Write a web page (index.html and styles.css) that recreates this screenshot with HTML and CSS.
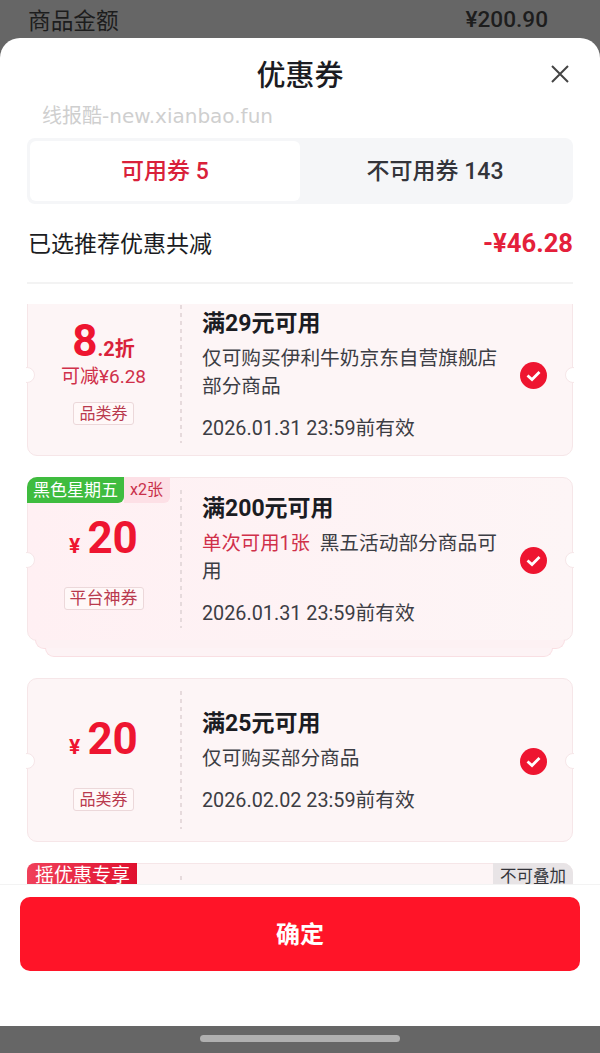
FILE: index.html
```html
<!DOCTYPE html>
<html lang="zh-CN">
<head>
    <meta charset="UTF-8">
    <meta name="viewport" content="width=device-width, initial-scale=1.0">
    <title>优惠券</title>
    <link rel="stylesheet" href="styles.css">
</head>
<body>
<div class="page-row">
    <span>商品金额</span>
    <span class="page-price">¥200.90</span>
</div>
<div class="sheet">
    <header class="sheet-head">
        <h1>优惠券</h1>
        <button class="close" aria-label="关闭">
            <svg width="20" height="20" viewBox="0 0 20 20"><path d="M2 2 L18 18 M18 2 L2 18" stroke="#444" stroke-width="2" fill="none"/></svg>
        </button>
    </header>
    <div class="watermark">线报酷-new.xianbao.fun</div>
    <div class="tabs">
        <button class="tab active">可用券 5</button>
        <button class="tab">不可用券 143</button>
    </div>
    <div class="summary">
        <span class="summary-label">已选推荐优惠共减</span>
        <span class="summary-amount">-¥46.28</span>
    </div>
    <div class="divider"></div>

    <div class="list">
        <div class="coupon first">
            <i class="notch left"></i><i class="notch right"></i>
            <div class="coupon-left">
                <div class="amount-area">
                    <div class="amount"><span class="big">8</span><span class="rest">.2折</span></div>
                    <div class="saving">可减¥6.28</div>
                </div>
                <span class="kind">品类券</span>
            </div>
            <div class="coupon-right">
                <div class="coupon-title">满29元可用</div>
                <div class="coupon-desc">仅可购买伊利牛奶京东自营旗舰店部分商品</div>
                <div class="coupon-date">2026.01.31 23:59前有效</div>
            </div>
            <svg class="check" width="27" height="27" viewBox="0 0 27 27"><circle cx="13.5" cy="13.5" r="13.5" fill="#ee1530"/><path d="M7.5 13.5 L12 17.5 L19.5 10" stroke="#fff" stroke-width="2.8" fill="none"/></svg>
        </div>

        <div class="coupon stacked">
            <i class="notch left"></i><i class="notch right"></i>
            <div class="flags">
                <span class="flag-green">黑色星期五</span>
                <span class="flag-count">x2张</span>
            </div>
            <div class="coupon-left">
                <div class="amount-area">
                    <div class="amount"><span class="yen">¥</span><span class="big">20</span></div>
                </div>
                <span class="kind wide">平台神券</span>
            </div>
            <div class="coupon-right">
                <div class="coupon-title">满200元可用</div>
                <div class="coupon-desc"><span class="once">单次可用1张</span>&nbsp;&nbsp;黑五活动部分商品可用</div>
                <div class="coupon-date">2026.01.31 23:59前有效</div>
            </div>
            <svg class="check" width="27" height="27" viewBox="0 0 27 27"><circle cx="13.5" cy="13.5" r="13.5" fill="#ee1530"/><path d="M7.5 13.5 L12 17.5 L19.5 10" stroke="#fff" stroke-width="2.8" fill="none"/></svg>
        </div>

        <div class="coupon">
            <i class="notch left"></i><i class="notch right"></i>
            <div class="coupon-left">
                <div class="amount-area">
                    <div class="amount"><span class="yen">¥</span><span class="big">20</span></div>
                </div>
                <span class="kind">品类券</span>
            </div>
            <div class="coupon-right">
                <div class="coupon-title">满25元可用</div>
                <div class="coupon-desc">仅可购买部分商品</div>
                <div class="coupon-date">2026.02.02 23:59前有效</div>
            </div>
            <svg class="check" width="27" height="27" viewBox="0 0 27 27"><circle cx="13.5" cy="13.5" r="13.5" fill="#ee1530"/><path d="M7.5 13.5 L12 17.5 L19.5 10" stroke="#fff" stroke-width="2.8" fill="none"/></svg>
        </div>

        <div class="coupon">
            <div class="flags">
                <span class="flag-red">摇优惠专享</span>
            </div>
            <span class="flag-grey">不可叠加</span>
            <div class="coupon-left"></div>
        </div>
    </div>

    <div class="sheet-foot">
        <button class="confirm">确定</button>
    </div>
</div>
<div class="home-area">
    <div class="home-bar"></div>
</div>
</body>
</html>
```

FILE: styles.css
```css
* {
    box-sizing: border-box;
}

body {
    margin: 0;
    height: 1053px;
    overflow: hidden;
    display: flex;
    flex-direction: column;
    background-color: #666;
    font-family: Roboto, "Noto Sans CJK SC", sans-serif;
    color: #1b1c22;
}

button {
    font-family: inherit;
    border: none;
    padding: 0;
    cursor: pointer;
}

.page-row {
    height: 38px;
    flex: none;
    display: flex;
    justify-content: space-between;
    align-items: center;
    padding: 0 52px 0 28px;
    font-size: 22.7px;
    color: #1d1d1d;
}

.page-price {
    font-size: 22.6px;
    font-weight: 500;
}

.sheet {
    height: 988px;
    flex: none;
    display: flex;
    flex-direction: column;
    background-color: #fff;
    border-radius: 20px 20px 0 0;
}

.sheet-head {
    height: 60px;
    flex: none;
    display: flex;
    justify-content: center;
    align-items: center;
    position: relative;
    padding-top: 10px;
}

.sheet-head h1 {
    margin: 0;
    font-size: 29px;
    font-weight: 500;
}

.close {
    position: absolute;
    right: 30px;
    top: 26px;
    width: 20px;
    height: 20px;
    background: none;
}

.watermark {
    height: 40px;
    flex: none;
    padding-left: 42px;
    font-family: "DejaVu Sans", "Noto Sans CJK SC", sans-serif;
    font-size: 20px;
    line-height: 36px;
    color: #cfcfcf;
}

.tabs {
    height: 66px;
    flex: none;
    margin: 0 27px;
    padding: 3px;
    display: flex;
    background-color: #f5f6f8;
    border-radius: 8px;
}

.tab {
    flex: 1;
    padding-bottom: 4px;
    font-size: 23px;
    font-weight: 500;
    color: #33343a;
    background: none;
}

.tab.active {
    background-color: #fff;
    border-radius: 6px;
    color: #d9213a;
}

.summary {
    height: 78px;
    flex: none;
    margin: 0 27px 0 28px;
    display: flex;
    justify-content: space-between;
    align-items: center;
    font-size: 23px;
}

.summary-label {
    margin-top: -3px;
}

.summary-amount {
    font-size: 25.6px;
    font-weight: 700;
    color: #e4203a;
}

.divider {
    height: 2px;
    flex: none;
    margin: 0 27px 20px;
    background-color: #f3f3f3;
}

.list {
    height: 580px;
    flex: none;
    overflow: hidden;
    padding: 0 27px;
}

.coupon {
    height: 164px;
    margin-bottom: 21px;
    position: relative;
    display: flex;
    background-color: #fdf5f6;
    border: 1px solid #f6e6e8;
    border-radius: 10px;
}

.coupon.first {
    margin-top: -12px;
}

.coupon.stacked {
    margin-bottom: 37px;
    background: linear-gradient(90deg, #fff0f3, #fdf5f6);
}

.coupon.stacked::before,
.coupon.stacked::after {
    content: "";
    position: absolute;
    border: 1px solid #f9dfe3;
    border-top: none;
    border-radius: 0 0 10px 10px;
}

.coupon.stacked::before {
    left: 7px;
    right: 7px;
    top: 100%;
    height: 8px;
    background-color: #fdf1f3;
}

.coupon.stacked::after {
    left: 17px;
    right: 19px;
    top: calc(100% + 8px);
    height: 8px;
    background-color: #fdf3f5;
}

.notch {
    position: absolute;
    top: 74px;
    width: 16px;
    height: 16px;
    border-radius: 50%;
    background-color: #fff;
    border: 1px solid #f6e6e8;
}

.notch.left {
    left: -9px;
    clip-path: inset(0 0 0 7px);
}

.notch.right {
    right: -9px;
    clip-path: inset(0 7px 0 0);
}

.coupon-left {
    width: 154px;
    height: 138px;
    flex: none;
    margin-top: 12px;
    padding: 0 3px 18px 0;
    display: flex;
    flex-direction: column;
    align-items: center;
    background: repeating-linear-gradient(#e6dadc 0 4px, transparent 4px 8px) right top / 2px 100% no-repeat;
}

.amount-area {
    flex: 1;
    display: flex;
    flex-direction: column;
    justify-content: center;
    align-items: center;
}

.amount {
    height: 48px;
    display: flex;
    align-items: baseline;
    color: #ee1530;
    font-weight: 700;
    line-height: 48px;
}

.amount .big {
    font-size: 44px;
}

.amount .rest {
    font-size: 20px;
    color: #d9213a;
}

.amount .yen {
    font-size: 21px;
    margin-right: 7px;
}

.saving {
    height: 24px;
    font-size: 19px;
    line-height: 24px;
    color: #d0304a;
}

.kind {
    height: 23px;
    margin-top: 2px;
    padding: 0 5px;
    font-size: 16px;
    line-height: 21px;
    color: #b93a4e;
    background-color: #fff8f8;
    border: 1px solid #ecd8da;
    border-radius: 3px;
}

.kind.wide {
    font-size: 17px;
}

.coupon-right {
    width: 320px;
    padding: 3px 0 0 20px;
    display: flex;
    flex-direction: column;
    justify-content: center;
}

.coupon-title {
    height: 30px;
    font-size: 23px;
    font-weight: 700;
    line-height: 30px;
}

.coupon-desc {
    margin-top: 6px;
    font-size: 19.7px;
    line-height: 28px;
    color: #3c3d44;
}

.once {
    color: #d0304a;
    font-size: 19.4px;
}

.coupon-date {
    margin-top: 14px;
    font-size: 19.8px;
    line-height: 28px;
    color: #3c3d44;
}

.check {
    position: absolute;
    right: 25px;
    top: 69px;
}

.flags {
    position: absolute;
    left: -1px;
    top: -1px;
    display: flex;
}

.flag-green {
    height: 26px;
    padding: 0 6px;
    font-size: 17px;
    line-height: 26px;
    color: #fff;
    background-color: #3fbc3f;
    border-radius: 10px 0 6px 0;
}

.flag-count {
    height: 26px;
    padding: 0 7px 0 6px;
    font-size: 16px;
    line-height: 26px;
    color: #c9304a;
    background-color: #fde0e6;
    border-radius: 0 0 6px 0;
}

.flag-red {
    height: 26px;
    padding: 0 7px 0 8px;
    font-size: 19px;
    line-height: 26px;
    color: #fff;
    background: linear-gradient(90deg, #f0405a, #e0102e);
    border-radius: 8px 0 0 0;
}

.flag-grey {
    position: absolute;
    right: -1px;
    top: -1px;
    height: 26px;
    padding: 0 7px;
    font-size: 16.5px;
    line-height: 28px;
    color: #33343a;
    background-color: #e8e4e6;
    border-radius: 0 10px 0 0;
}

.sheet-foot {
    flex: 1;
    padding: 12px 20px 0;
    background-color: #fff;
    border-top: 1px solid #f3f3f3;
}

.confirm {
    width: 100%;
    height: 74px;
    padding-bottom: 3px;
    font-size: 24px;
    font-weight: 700;
    color: #fff;
    background-color: #ff1428;
    border-radius: 10px;
}

.home-area {
    flex: 1;
    display: flex;
    justify-content: center;
    padding-top: 9px;
}

.home-bar {
    width: 200px;
    height: 7px;
    background-color: #b0b0b0;
    border-radius: 4px;
}
```
